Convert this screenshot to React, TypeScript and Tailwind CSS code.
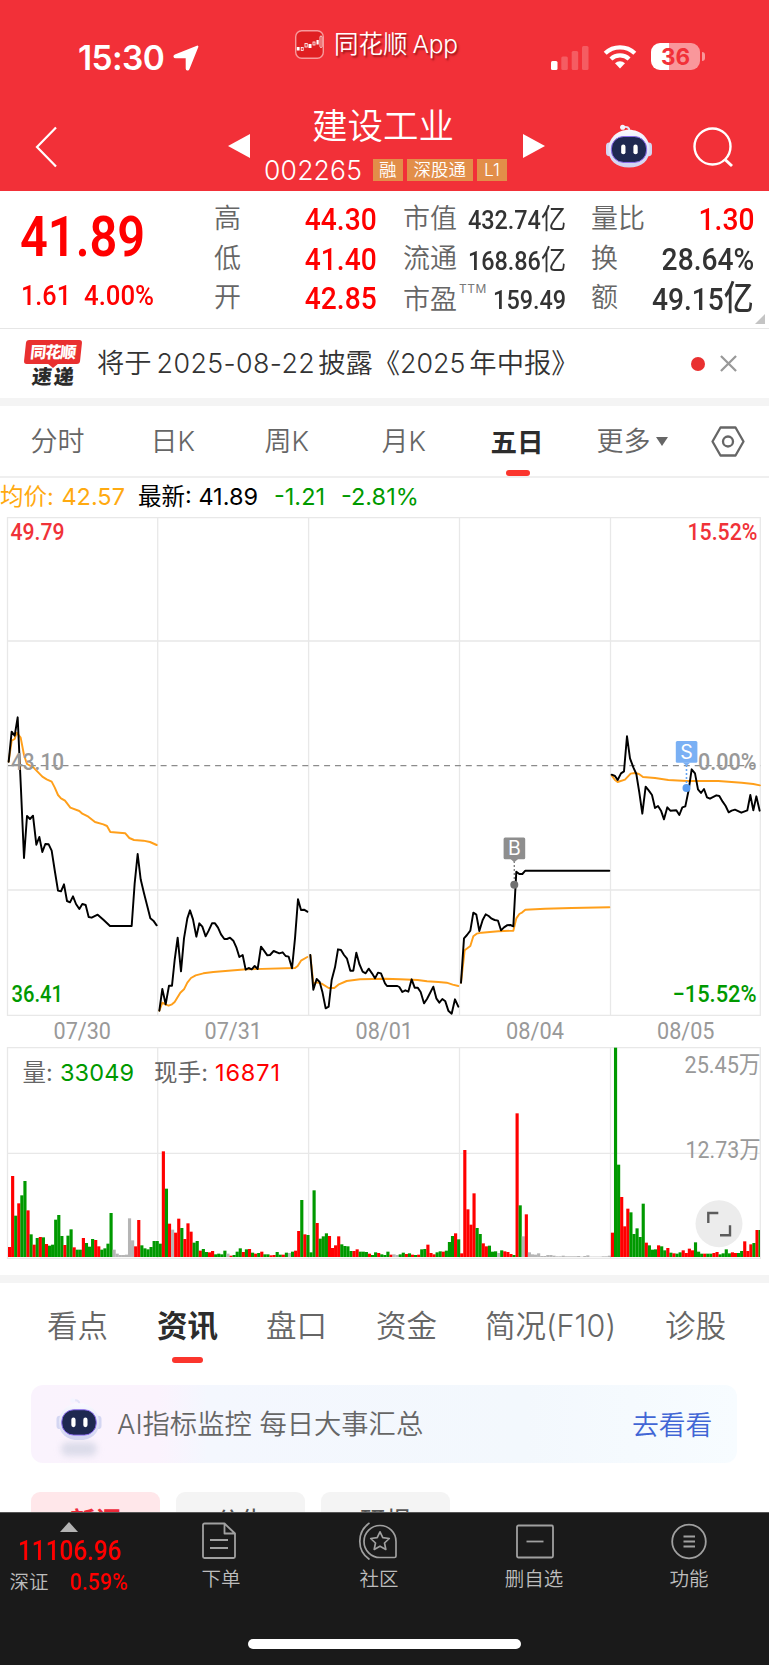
import React from "react";

const SANS = "font-['Inter','Noto_Sans_CJK_SC',sans-serif]";
const NUM = "inline-block whitespace-nowrap font-['Roboto','Noto_Sans_CJK_SC',sans-serif] font-medium";

/* ---------- chart data ---------- */

// [colour, height] pairs; r = up, g = down, n = flat
const VOLUME =
  "r30 r243 g124 r161 g185 g228 r140 g68 r37 g57 r60 g59 r39 g34 g37 g112 g126 g63 r36 g64 g83 r29 g22 g22 r57 g42 g31 g54 r51 r32 g22 g26 g40 g132 n22 n10 n6 n6 n7 n116 n50 r32 r111 g35 g26 g23 g30 g48 g48 " +
  "g40 r317 g205 r100 n82 r73 r115 g87 r54 r101 r76 g43 g48 r19 g24 g15 r14 r18 g8 g10 g8 g19 n10 r4 g6 g16 g26 r15 g23 r24 g13 r10 g12 r16 g8 g8 r5 r6 g15 g7 r7 g13 n12 g16 r19 r78 g171 r68 g66 " +
  "g14 g200 r102 g55 g62 g71 r63 r27 r35 r62 g38 g33 g32 g18 r18 r23 g16 g16 g15 r10 g6 g14 r12 g8 g6 g16 r7 n8 n6 g8 g13 r9 g11 r7 g6 r7 g23 g24 r37 r12 r8 g14 g17 r16 g19 g45 g63 r71 g53 " +
  "r11 r321 r143 r97 r191 g87 g69 r41 r32 g34 g16 g17 n12 g20 r17 r15 r9 g6 r431 g155 n62 r128 n14 n8 n7 n11 n3 n3 n6 n6 n4 n2 n2 n4 n2 n2 n2 n2 n3 n1 n3 n5 n1 n1 n1 n1 n2 n2 n4 " +
  "r73 g628 g277 r180 r92 r145 g134 g69 g86 g60 g160 r43 g35 g22 g23 r35 g32 g20 r27 g13 r11 g10 g14 r20 r12 r25 r20 g44 g16 g10 r10 g10 g10 r12 r15 g8 g11 g23 g11 r14 r12 g12 g18 r47 r18 r38 g42 r81 g81";

const BAR_COLOR: Record<string, string> = { r: "#ff0000", g: "#009900", n: "#b5b5b5" };

const PRICE = [
  "26,215 35,125 44,137 53,82 63,300 72,504 81,378 90,387 99,377 109,464 118,441 127,486 136,462 146,463 155,482 164,540 174,602 183,604 192,583 201,633 210,637 219,619 228,642 238,657 247,642 257,645 266,681 275,683 293,674 311,690 330,708 395,708 404,580 413,492 422,568 432,610 441,645 451,685 460,692 470,706",
  "478,962 487,897 497,943 507,887 516,887 524,810 533,743 543,844 552,745 562,685 570,661 579,688 589,740 598,700 607,710 617,739 626,722 636,700 645,700 654,713 663,733 673,747 681,747 690,743 700,752 709,772 718,801 728,795 737,839 746,834 755,838 764,828 773,837 783,770 792,782 802,796 810,795 821,783 838,790 848,787 857,798 866,800 876,835 885,745 894,628 903,660 912,659 922,665",
  "931,795 940,899 950,867 959,876 967,905 977,955 986,950 995,870 1005,832 1014,778 1023,780 1032,795 1041,806 1051,842 1060,842 1069,788 1078,822 1088,845 1097,850 1106,836 1116,850 1125,865 1134,848 1143,850 1155,880 1161,888 1192,888 1198,891 1207,906 1216,901 1225,905 1235,868 1244,893 1253,893 1262,906 1272,940 1281,927 1300,890 1309,925 1318,938 1327,927 1336,934 1345,962 1355,971 1365,928 1375,950",
  "1383,878 1392,745 1401,735 1411,722 1420,668 1429,674 1438,723 1448,690 1457,673 1466,678 1475,686 1484,690 1494,692 1503,721 1512,712 1521,706 1531,705 1540,709 1549,545 1558,552 1567,552 1576,542 1828,542",
  "1835,254 1845,258 1853,270 1863,250 1872,244 1881,139 1890,205 1900,232 1909,252 1918,308 1927,371 1937,290 1946,301 1956,315 1965,354 1974,348 1983,362 1992,388 2002,352 2011,362 2029,361 2038,375 2047,352 2056,349 2066,300 2075,238 2085,250 2094,298 2103,309 2112,297 2121,322 2130,326 2149,316 2158,318 2168,335 2177,348 2186,367 2195,362 2205,359 2224,368 2242,361 2251,315 2260,361 2269,319 2279,362",
];

const AVERAGE = [
  "26,215 35,152 44,147 50,128 62,143 72,195 81,222 100,232 127,260 140,268 155,275 164,292 174,315 183,325 195,332 211,353 238,363 247,371 265,380 285,396 310,403 321,408 331,426 376,430 388,444 402,450 430,452 450,456 470,465",
  "478,962 487,938 497,944 506,947 516,943 524,936 541,908 552,898 562,878 573,864 587,856 610,850 640,846 685,842 740,838 885,834 893,828 903,812 922,801",
  "931,795 940,880 950,877 965,881 986,894 1003,894 1015,884 1040,873 1080,868 1155,866 1200,868 1253,870 1281,874 1315,876 1340,878 1358,884 1375,888",
  "1383,878 1394,781 1411,768 1420,739 1430,731 1445,728 1495,724 1540,722 1549,685 1558,672 1567,667 1576,659 1635,656 1715,654 1828,652",
  "1835,256 1845,270 1853,276 1875,269 1892,251 1905,249 1917,252 1929,261 1965,264 2005,270 2060,273 2155,273 2225,278 2260,282 2280,286",
];

/* ---------- icons ---------- */

function Robot({ className }: { className?: string }) {
  return (
    <svg viewBox="0 0 48 46" className={className}>
      <defs>
        <linearGradient id="shell" x1="0" y1="0" x2="0" y2="1">
          <stop offset="0" stopColor="#fafaff" />
          <stop offset="1" stopColor="#cfd2f0" />
        </linearGradient>
      </defs>
      <path d="M18 3.500c4-1.500 6.500.2 6.500 4" fill="none" stroke="#e4e4f8" strokeWidth="2" />
      <circle cx="17.500" cy="3.300" r="2.600" fill="#f4f4ff" />
      <rect x="0.500" y="19" width="7" height="14" rx="3.500" fill="#d4d6f2" />
      <rect x="40.500" y="19" width="7" height="14" rx="3.500" fill="#d4d6f2" />
      <path d="M24 6C36 6 45 14.500 45 26S37 44.500 24 44.500 3 37.500 3 26 12 6 24 6z" fill="url(#shell)" />
      <rect x="6" y="12.800" width="36" height="26.500" rx="12.500" fill="#1e2850" stroke="#8b6cf0" strokeWidth="1" />
      <rect x="16" y="21" width="4.400" height="10" rx="2.200" fill="#fff" />
      <rect x="28.500" y="21" width="4.400" height="10" rx="2.200" fill="#fff" />
    </svg>
  );
}

/* ---------- header ---------- */

function StatusBar() {
  return (
    <div className="flex h-[100px] items-start">
      <div className="flex w-[295px] items-center pl-[78px] pt-[37px]">
        <span className="w-[95px] whitespace-nowrap text-[33.500px] font-semibold leading-[42px] tracking-[-0.6px]">15:30</span>
        <svg viewBox="0 0 26 26" className="h-[26px] w-[26px]">
          <path d="M24.300 1.700 15.500 23.700c-.5 1.200-1.700 1-1.700-.3V13.300c0-.7-.4-1.100-1.100-1.100H2.700c-1.400 0-1.600-1.300-.4-1.800z" fill="#fff" stroke="#fff" strokeWidth="2.200" strokeLinejoin="round" />
        </svg>
      </div>
      <div className="flex w-[256px] items-center pt-[26px]">
        <svg viewBox="0 0 29 29" className="mt-[1px] h-[29px] w-[29px]">
          <rect x="0.700" y="0.700" width="27.600" height="27.600" rx="6" fill="#e01f22" stroke="#f79a9c" strokeWidth="1.400" />
          <g fill="#fff">
            <rect x="1.800" y="17" width="2.800" height="3.500" />
            <rect x="13.500" y="14" width="3" height="4" />
            <rect x="21.500" y="10" width="2.200" height="4.500" />
          </g>
          <g fill="none" stroke="#fff" strokeWidth="0.800">
            <rect x="6.200" y="17.500" width="2" height="3" />
            <rect x="10" y="13.500" width="2.200" height="3.500" />
            <rect x="18" y="12" width="2" height="3" />
            <rect x="25" y="6" width="2" height="11.500" rx="1" />
          </g>
        </svg>
        <span className="ml-[10px] whitespace-nowrap text-[24.5px] font-[350] leading-[36px] [text-shadow:1.500px_2px_2px_rgba(90,0,0,0.6)]">
          同花顺<span className="ml-[5px] tracking-[-0.3px]">App</span>
        </span>
      </div>
      <div className="flex items-center pt-[43px]">
        <svg viewBox="0 0 38 26" className="h-[26px] w-[38px]">
          <rect x="0" y="17" width="6.500" height="9" rx="1.500" fill="#fff" />
          <g fill="#f55c62">
            <rect x="10.300" y="12.500" width="6.500" height="13.500" rx="1.500" />
            <rect x="20.700" y="7" width="6.500" height="19" rx="1.500" />
            <rect x="31" y="2" width="6.500" height="24" rx="1.500" />
          </g>
        </svg>
        <svg viewBox="0 0 34 25" className="ml-[14px] h-[25px] w-[34px]" fill="none" stroke="#fff" strokeWidth="4.300">
          <path d="M2.200 9.300a21.500 21.500 0 0 1 29.600 0" />
          <path d="M7.900 15a13.300 13.300 0 0 1 18.200 0" />
          <path d="M17 24.500l-5-5.200a7.300 7.300 0 0 1 10 0z" fill="#fff" stroke="none" />
        </svg>
        <div className="ml-[14px] flex h-[27px] w-[49px] items-center justify-center rounded-[9px] bg-[linear-gradient(to_right,#fff_36%,#f9979b_36%)] text-[22.500px] font-bold text-[#f23038]">36</div>
        <div className="ml-[1.500px] h-[9px] w-[3px] rounded-r-full bg-[#f9979b]" />
      </div>
    </div>
  );
}

function Tag({ children }: { children: React.ReactNode }) {
  return <span className="flex h-[22px] items-center bg-[#e28e49] px-[6.500px] text-[17.500px] font-[350] leading-none">{children}</span>;
}

function Header() {
  return (
    <header className="h-[191px] bg-[#f23038] text-white">
      <StatusBar />
      <div className="flex h-[91px] items-start">
        <svg viewBox="0 0 24 42" className="ml-[34px] mt-[26px] h-[42px] w-[24px]" fill="none" stroke="#fff" strokeWidth="2.200">
          <path d="M22 1.500 3 21l19 19.500" />
        </svg>
        <svg viewBox="0 0 23 26" className="ml-[170px] mt-[33px] h-[26px] w-[23px]">
          <path d="M22 1v24L0 13z" fill="#fff" />
        </svg>
        <div className="ml-[13px] flex w-[244px] flex-col">
          <div className="pl-[48px] pt-[5px] text-[35.500px] font-[350] leading-[44px]">建设工业</div>
          <div className="mt-[9px] flex h-[24px] items-center gap-[4px]">
            <span className="w-[104.500px] whitespace-nowrap text-[26.500px] font-[350] leading-[24px] tracking-[0.200px]">002265</span>
            <Tag>融</Tag>
            <Tag>深股通</Tag>
            <Tag>
              <span className="px-[1px]">L1</span>
            </Tag>
          </div>
        </div>
        <svg viewBox="0 0 23 26" className="ml-[14px] mt-[33px] h-[26px] w-[23px]">
          <path d="M1 1v24l22-12z" fill="#fff" />
        </svg>
        <Robot className="ml-[60px] mt-[24px] h-[45px] w-[48px]" />
        <svg viewBox="0 0 42 42" className="ml-[40px] mt-[27px] h-[42px] w-[42px]" fill="none" stroke="#fff" strokeWidth="2.400">
          <circle cx="19.500" cy="19.500" r="18" />
          <path d="M32 32.500l7 6.500" strokeWidth="3" />
        </svg>
      </div>
    </header>
  );
}

/* ---------- quote ---------- */

function Label({ children }: { children: React.ReactNode }) {
  return <span className="whitespace-nowrap text-[27px] font-[350] leading-[39.500px] text-[#666]">{children}</span>;
}

const BIG = NUM + " origin-right scale-x-[.88] text-[32px] leading-[39.500px]";
const MID = NUM + " origin-right scale-x-[.9] text-[26px] leading-[39.500px]";

function Quote() {
  return (
    <section className="relative flex h-[138px] items-start border-b border-[#e6e6e6]">
      <div className="w-[214px] shrink-0 pl-[20px] text-[#ff0000]">
        <div className="mt-[18px] h-[56px]">
          <span className={NUM + " origin-left scale-x-[.87] text-[56px] font-semibold leading-[56px]"}>41.89</span>
        </div>
        <div className="mt-[14px] flex pl-[1px]">
          <span className={NUM + " w-[63px] origin-left scale-x-[.9] text-[28px] leading-[34px]"}>1.61</span>
          <span className={NUM + " origin-left scale-x-[.92] text-[28px] leading-[34px]"}>4.00%</span>
        </div>
      </div>
      <div className="flex w-[27px] shrink-0 flex-col pt-[8px]">
        <Label>高</Label>
        <Label>低</Label>
        <Label>开</Label>
      </div>
      <div className="flex w-[136px] shrink-0 flex-col items-end pt-[9px] text-[#ff0000]">
        {["44.30", "41.40", "42.85"].map((v) => (
          <span key={v} className={BIG}>{v}</span>
        ))}
      </div>
      <div className="ml-[26px] flex w-[54px] shrink-0 flex-col pt-[8px]">
        <Label>市值</Label>
        <Label>流通</Label>
        <div className="flex pt-[2px]">
          <Label>市盈</Label>
          <span className="ml-[2px] mt-[3px] text-[12px] leading-[12px] tracking-[0.500px] text-[#777]">TTM</span>
        </div>
      </div>
      <div className="flex w-[109px] shrink-0 flex-col items-end pt-[9px] text-[#333]">
        <span className={MID}>432.74<span className="text-[28px] font-normal">亿</span></span>
        <span className={MID}>168.86<span className="text-[28px] font-normal">亿</span></span>
        <span className={MID}>159.49</span>
      </div>
      <div className="ml-[25px] flex w-[54px] shrink-0 flex-col pt-[8px]">
        <Label>量比</Label>
        <Label>换</Label>
        <Label>额</Label>
      </div>
      <div className="flex w-[109px] shrink-0 flex-col items-end pt-[9px] text-[#333]">
        <span className={BIG + " text-[#ff0000]"}>1.30</span>
        <span className={BIG}>28.64%</span>
        <span className={BIG}>49.15<span className="text-[34px]">亿</span></span>
      </div>
      <svg viewBox="0 0 10 10" className="absolute bottom-[4px] right-[4px] h-[10px] w-[10px]">
        <path d="M10 0v10H0z" fill="#c4c4c4" />
      </svg>
    </section>
  );
}

function News() {
  return (
    <section className="flex h-[77px] items-center border-b-[8px] border-[#f4f4f4]">
      <div className="ml-[24px] mt-[1px] flex h-[48px] w-[58px] flex-col items-center">
        <div className="flex h-[24px] w-[56px] -skew-x-6 items-center justify-center rounded-[3px] bg-[#e93030] text-[16px] font-black leading-none tracking-[-1px] text-white">同花顺</div>
        <svg viewBox="0 0 12 5" className="h-[4px] w-[10px]"><path d="M0 0h12L6 5z" fill="#e93030" /></svg>
        <div className="-skew-x-6 pl-[2px] text-[20px] font-black leading-[19px] tracking-[2px] text-[#2a2a2a]">速递</div>
      </div>
      <div className="ml-[15px] w-[594px] whitespace-nowrap text-[27.300px] font-[350] leading-[36px] text-[#333]">
        <span>将于</span>
        <span className="ml-[5px] text-[26.800px] tracking-[0.400px]">2025-08-22</span>
        <span className="ml-[3px]">披露《</span>
        <span className="text-[26.800px]">2025</span>
        <span className="ml-[4px]">年中报》</span>
      </div>
      <div className="h-[14px] w-[14px] rounded-full bg-[#e93030]" />
      <svg viewBox="0 0 18 18" className="ml-[15px] h-[17px] w-[17px]" stroke="#999" strokeWidth="2.400">
        <path d="M1 1l16 16M17 1 1 17" />
      </svg>
    </section>
  );
}

/* ---------- chart ---------- */

function PeriodTabs() {
  const tab = "whitespace-nowrap pt-[2px] text-[27px] font-[350] leading-[36px] text-[#666]";
  return (
    <nav className="flex h-[72px] items-center border-b-2 border-[#efefef] pl-[30.500px]">
      <span className={tab + " w-[120px]"}>分时</span>
      <span className={tab + " w-[114px]"}>日K</span>
      <span className={tab + " w-[117px]"}>周K</span>
      <span className={tab + " w-[109px]"}>月K</span>
      <div className="relative flex h-[70px] w-[106px] items-center">
        <span className="pt-[1px] text-[26.500px] font-bold leading-[36px] text-[#2c2c2c]">五日</span>
        <span className="absolute bottom-0 left-[15px] h-[6px] w-[24px] rounded-[3px] bg-[#fb352d]" />
      </div>
      <span className={tab}>更多</span>
      <svg viewBox="0 0 12 9" className="ml-[5px] h-[9px] w-[12px]"><path d="M0 0h12L6 9z" fill="#666" /></svg>
      <svg viewBox="0 0 34 31" className="ml-[43px] h-[31px] w-[34px]" fill="none" stroke="#666" strokeWidth="2.300">
        <path d="M9.500 1.500h15L32.500 15.500 24.500 29.500h-15L1.500 15.500z" strokeLinejoin="round" />
        <circle cx="17" cy="15.500" r="5" />
      </svg>
    </nav>
  );
}

function InfoLine() {
  return (
    <div className="flex h-[38px] items-center whitespace-nowrap text-[23.500px] leading-[38px]">
      <span className="w-[138px] text-[#ffaa10]">均价: <span className="ml-[1px]">42.57</span></span>
      <span className="w-[136px] text-black">最新: <span>41.89</span></span>
      <span className="w-[67px] text-[#009a00]">-1.21</span>
      <span className="text-[#009a00]">-2.81%</span>
    </div>
  );
}

type LabelProps = { x: number; y: number; w: number; size: number; fill: string; children: string; weight?: number };

function AxisText({ x, y, w, size, fill, children, weight = 500 }: LabelProps) {
  return (
    <text x={x} y={y} fontSize={size} fill={fill} fontWeight={weight} textLength={w} lengthAdjust="spacingAndGlyphs" className="font-['Roboto','Noto_Sans_CJK_SC',sans-serif]">
      {children}
    </text>
  );
}

function Chart() {
  const bars = VOLUME.split(" ");
  return (
    <svg viewBox="0 516 769 759" className="block h-[759px] w-[769px] shrink-0">
      <g fill="none" stroke="#e8e8e8" strokeWidth="1.300">
        <path d="M7.500 517.600H760.300V1015.300H7.500zM7.500 641H760.300M7.500 890H760.300" />
        <path d="M157.700 517v498M308.600 517v498M459.500 517v498M610.500 517v498" />
        <path d="M7.500 1047.600H760.300V1258.300H7.500zM7.500 1153.300H760.300" />
        <path d="M157.700 1047v211M308.600 1047v211M459.500 1047v211M610.500 1047v211" />
      </g>
      <path d="M8 765.600H760.300" stroke="#8c8c8c" strokeWidth="1.300" strokeDasharray="6 4.900" />

      <g transform="translate(0 690) scale(.33333)" fill="none" strokeLinejoin="round" strokeLinecap="round">
        {AVERAGE.map((p, i) => (
          <polyline key={i} points={p} stroke="#ff9f1a" strokeWidth="5.800" />
        ))}
        {PRICE.map((p, i) => (
          <polyline key={i} points={p} stroke="#000" strokeWidth="5.800" />
        ))}
      </g>

      <AxisText x={10.500} y={540} w={54} size={23.500} fill="#f03238">49.79</AxisText>
      <AxisText x={687.500} y={540} w={70} size={23.500} fill="#f03238">15.52%</AxisText>
      <AxisText x={11} y={770} w={53} size={23} fill="#999">43.10</AxisText>
      <AxisText x={698} y={770} w={58.500} size={23} fill="#999">0.00%</AxisText>
      <AxisText x={11.500} y={1001.500} w={51.500} size={23.500} fill="#009900">36.41</AxisText>
      <AxisText x={672.500} y={1001.500} w={84} size={23.500} fill="#009900">−15.52%</AxisText>
      <AxisText x={53.500} y={1038.500} w={57.500} size={24} fill="#999" weight={400}>07/30</AxisText>
      <AxisText x={204.500} y={1038.500} w={57.500} size={24} fill="#999" weight={400}>07/31</AxisText>
      <AxisText x={355.500} y={1038.500} w={57.500} size={24} fill="#999" weight={400}>08/01</AxisText>
      <AxisText x={506} y={1038.500} w={58} size={24} fill="#999" weight={400}>08/04</AxisText>
      <AxisText x={657} y={1038.500} w={57.500} size={24} fill="#999" weight={400}>08/05</AxisText>

      <path d="M514.300 861v20" stroke="#808080" strokeWidth="1.400" strokeDasharray="2 2" />
      <path d="M510.500 859h7.600l-3.800 3.300z" fill="#8e8e8e" />
      <rect x="503.600" y="837.600" width="21.600" height="21.600" rx="1.500" fill="#8e8e8e" />
      <text x="514.400" y="855.300" fontSize="19.500" fill="#fff" textAnchor="middle" className="font-['Inter',sans-serif]">B</text>
      <circle cx="514.300" cy="884.700" r="4" fill="#707070" />

      <path d="M686.500 765v20" stroke="#64a3f2" strokeWidth="1.600" strokeDasharray="2 2" />
      <path d="M682.700 762.500h7.600l-3.800 3.500z" fill="#7ab0f4" />
      <rect x="675.800" y="741" width="21.600" height="21.700" rx="1.500" fill="#7ab0f4" />
      <text x="686.600" y="758.800" fontSize="19.500" fill="#fff" textAnchor="middle" className="font-['Inter',sans-serif]">S</text>
      <circle cx="686.500" cy="788" r="4" fill="#5b9ef2" />

      {bars.map((b, i) => {
        const h = Number(b.slice(1)) / 3;
        const x = 8 + i * 3.076;
        return <rect key={i} x={x} y={1257 - h} width={Math.min(3.15, 760 - x)} height={h} fill={BAR_COLOR[b[0]]} />;
      })}

      <g fontSize="23.500" className="font-['Inter','Noto_Sans_CJK_SC',sans-serif]">
        <text x="22.500" y="1080.500" fill="#666">量:</text>
        <text x="60" y="1080.500" fill="#009900" textLength="74">33049</text>
        <text x="154" y="1080.500" fill="#666" textLength="54">现手:</text>
        <text x="215" y="1080.500" fill="#ff0000" textLength="65">16871</text>
      </g>
      <AxisText x={684.500} y={1073} w={76} size={23.500} fill="#999" weight={400}>25.45万</AxisText>
      <AxisText x={685.500} y={1157.500} w={75} size={23.500} fill="#999" weight={400}>12.73万</AxisText>

      <circle cx="719" cy="1223.700" r="23.500" fill="#ececec" />
      <path d="M708.300 1223v-10h10M730 1225.300v10h-10" fill="none" stroke="#5c5c5c" strokeWidth="2.400" />
    </svg>
  );
}

/* ---------- info section ---------- */

function InfoTabs() {
  const tab = "whitespace-nowrap text-[30.500px] font-[350] leading-[44px] text-[#666]";
  return (
    <nav className="flex h-[102px] items-start border-t-[8px] border-[#f4f4f4] pl-[47px] pt-[21px]">
      <span className={tab + " w-[110px]"}>看点</span>
      <div className="flex w-[109px] flex-col">
        <span className="text-[30.500px] font-bold leading-[44px] text-[#2c2c2c]">资讯</span>
        <span className="ml-[15px] mt-[9px] h-[6px] w-[31px] rounded-[3px] bg-[#fb352d]" />
      </div>
      <span className={tab + " w-[110px]"}>盘口</span>
      <span className={tab + " w-[109px]"}>资金</span>
      <span className={tab + " w-[180px]"}>简况<span className="text-[30.500px]">(F10)</span></span>
      <span className={tab}>诊股</span>
    </nav>
  );
}

function Banner() {
  return (
    <div className="ml-[31px] mt-[8px] flex h-[78px] w-[706px] items-center rounded-[12px] bg-[linear-gradient(to_right,#faf3fd_0%,#fbf3fd_18%,#f4f7fe_25%,#f3f8fd_70%,#f7fcff_100%)] pl-[25px]">
      <div className="flex flex-col items-center pt-[5px]">
        <Robot className="h-[45px] w-[46px]" />
        <div className="h-[14px] w-[36px] rounded-full bg-[#dcdcea] blur-[3px]" />
      </div>
      <span className="ml-[15px] w-[515px] whitespace-nowrap pt-[2px] text-[27.300px] font-[350] leading-[38px] text-[#666]">
        AI指标监控 每日大事汇总
      </span>
      <span className="pt-[1px] text-[26.800px] font-[350] leading-[38px] text-[#4166d5]">去看看</span>
    </div>
  );
}

function Chips() {
  const chip = "flex h-[20px] w-[129px] justify-center overflow-hidden rounded-t-[9px] pt-[12px] text-[25.500px] leading-[34px]";
  return (
    <div className="mt-[29px] flex h-[20px] gap-[16px] overflow-hidden pl-[31px]">
      <div className={chip + " bg-[#ffe7ea] font-bold text-[#ee2a3a]"}>新闻</div>
      <div className={chip + " bg-[#f4f4f4] text-[#555]"}>公告</div>
      <div className={chip + " bg-[#f4f4f4] text-[#555]"}>研报</div>
    </div>
  );
}

/* ---------- bottom bar ---------- */

function BottomBar() {
  const caption = "whitespace-nowrap text-[19.500px] font-[350] leading-[26px] text-[#bdbdbd]";
  const icon = "h-[38px] w-[42px]";
  return (
    <footer className="h-[153px] border-t border-[#555] bg-[#1a1a1a]">
      <div className="flex h-[126px]">
        <div className="w-[159px] pt-[9px]">
          <svg viewBox="0 0 18 10" className="ml-[60px] h-[10px] w-[18px]"><path d="M9 0l9 10H0z" fill="#b4b4b4" /></svg>
          <div className="h-[37px] pl-[18px]">
            <span className={NUM + " origin-left scale-x-[.87] text-[28px] leading-[38px] text-[#ff0000]"}>11106.96</span>
          </div>
          <div className="flex items-center pl-[9.500px]">
            <span className="w-[60px] text-[19.500px] font-[350] leading-[26px] text-[#bdbdbd]">深证</span>
            <span className={NUM + " origin-left scale-x-[.91] text-[23.500px] leading-[24px] text-[#ff0000]"}>0.59%</span>
          </div>
        </div>
        <div className="ml-[42px] flex w-[40px] flex-col items-center pt-[9px]">
          <svg viewBox="0 0 42 38" className={icon + " -translate-x-[2px]"} fill="none" stroke="#a0a0a0" strokeWidth="1.800" strokeLinejoin="round">
            <path d="M26.500 1.500H6.500a1.500 1.500 0 0 0-1.500 1.500v31.500a1.500 1.500 0 0 0 1.500 1.500h29a1.500 1.500 0 0 0 1.500-1.500V11.500zM26.500 1.500v10H37M12 18h18M12 26h18" />
          </svg>
          <span className={caption + " mt-[6px]"}>下单</span>
        </div>
        <div className="ml-[118px] flex w-[40px] flex-col items-center pt-[9px]">
          <svg viewBox="0 0 42 38" className={icon + " -translate-x-[2px]"} fill="none" stroke="#a0a0a0" strokeWidth="1.700" strokeLinejoin="round">
            <path d="M24 3.500a16 16 0 0 1 16 16V34a1.500 1.500 0 0 1-1.500 1.500H24a16 16 0 0 1 0-32z" />
            <path d="M13.500 1A22 22 0 0 0 13.500 37.500" />
            <path d="M24 9.800l2.800 5.900 6.500.8-4.800 4.500 1.300 6.400-5.800-3.200-5.800 3.200 1.300-6.400-4.800-4.500 6.500-.8z" />
          </svg>
          <span className={caption + " mt-[6px]"}>社区</span>
        </div>
        <div className="ml-[105px] flex w-[60px] flex-col items-center pt-[9px]">
          <svg viewBox="0 0 42 38" className={icon} fill="none" stroke="#a0a0a0" strokeWidth="1.800">
            <rect x="4" y="3.500" width="36" height="32" rx="1.500" />
            <path d="M13.500 19.500h17" />
          </svg>
          <span className={caption + " mt-[6px]"}>删自选</span>
        </div>
        <div className="ml-[105px] flex w-[40px] flex-col items-center pt-[9px]">
          <svg viewBox="0 0 42 38" className={icon} fill="none" stroke="#a0a0a0" strokeWidth="1.800">
            <circle cx="21" cy="19.500" r="16.800" />
            <path d="M15.500 14.500h11.500M15.500 19.500h11.500M15.500 24.500h11.500" />
          </svg>
          <span className={caption + " mt-[6px]"}>功能</span>
        </div>
      </div>
      <div className="mx-auto h-[10px] w-[273px] rounded-full bg-white" />
    </footer>
  );
}

export default function App() {
  return (
    <div className={SANS + " flex h-[1665px] w-[769px] flex-col overflow-hidden bg-white"}>
      <Header />
      <Quote />
      <News />
      <PeriodTabs />
      <InfoLine />
      <Chart />
      <InfoTabs />
      <Banner />
      <Chips />
      <BottomBar />
    </div>
  );
}
